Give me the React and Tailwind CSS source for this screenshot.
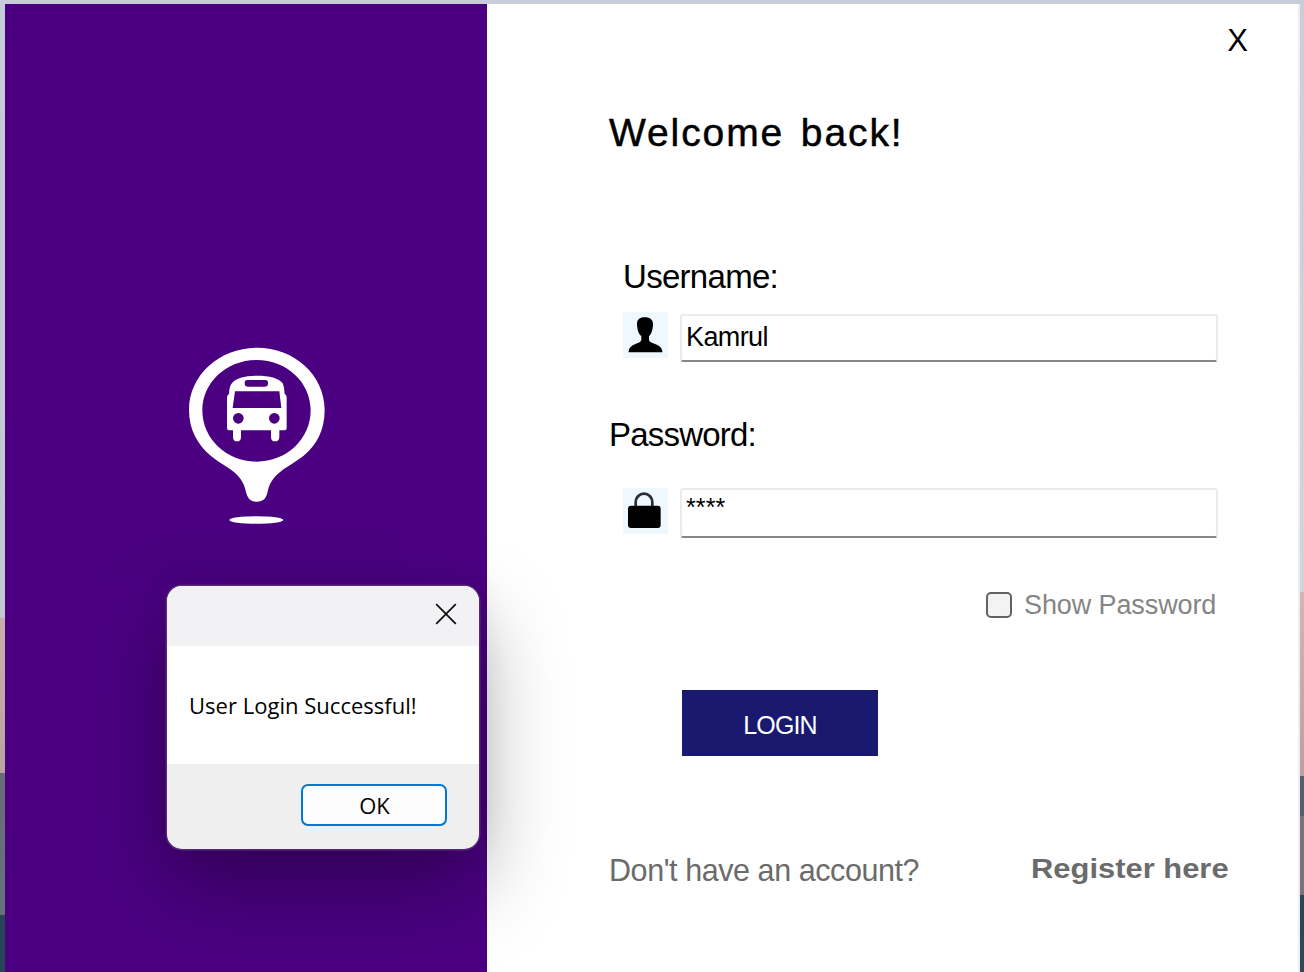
import React from "react";

function BusPin() {
  return (
    <svg className="ml-[74px] mt-[42px] h-[210px] w-[180px]" viewBox="0 0 540 630" aria-hidden="true">
      <path
        fill="#fff"
        fillRule="evenodd"
        d="M261 53C150 53 57 134 57 240C57 300 84 346 124 379C154 404 190 417 211 446C229 470 225 489 236 505C245 519 276 519 285 505C296 489 291 470 310 446C333 417 370 402 400 378C440 345 464 300 464 240C464 134 372 53 261 53ZM260 90C350 90 422 157 422 241C422 327 350 395 260 395C170 395 97 327 97 241C97 157 170 90 260 90Z"
      />
      <path
        fill="#fff"
        fillRule="evenodd"
        d="M184 162C196 144 224 137 261 137C298 137 327 144 338 160C343 171 343 183 344 193Q350 194 350 205V294Q350 301 344 301H328V320Q328 334 315 334Q303 334 303 320V301H213V320Q213 334 201 334Q189 334 189 320V301H177Q171 301 171 294V205Q171 194 177 193Q177 173 184 162ZM232 150Q224 150 224 160Q224 170 232 170H286Q294 170 294 160Q294 150 286 150ZM195 184L188 234H334L328 184ZM205 249A16 16 0 1 0 205 281A16 16 0 1 0 205 249ZM313 249A16 16 0 1 0 313 281A16 16 0 1 0 313 249Z"
      />
      <ellipse cx="259" cy="570" rx="81" ry="11.5" fill="#fff" />
    </svg>
  );
}

function UserIcon() {
  return (
    <svg className="mt-[-2px] h-[46px] w-[45px] shrink-0 bg-[#f0f8ff]" viewBox="0 0 135 138" aria-hidden="true">
      <path d="M65 16C49 16 41 24 42 39C43 54 46 65 55 73V84C52 97 20 94 17 117V121H118V117C115 94 81 97 78 84V73C86 65 89 54 90 39C91 24 82 16 65 16Z" />
    </svg>
  );
}

function LockIcon() {
  return (
    <svg className="h-[46px] w-[45px] shrink-0 bg-[#f0f8ff]" viewBox="0 0 135 138" aria-hidden="true">
      <path d="M38 55V44C38 8 88 8 88 44V55" fill="none" stroke="#2b2d30" strokeWidth="8" />
      <rect x="15" y="53" width="98" height="67" rx="9" />
    </svg>
  );
}

function Desktop({ children }) {
  return (
    <div className="relative flex h-[972px] w-[1304px] overflow-hidden bg-[#c8ced9] pt-1 font-['Liberation_Sans',Arial,sans-serif] text-black">
      <div className="flex w-[5px] shrink-0 flex-col">
        <div className="h-[614px] bg-linear-to-b from-[#c5cdd8] to-[#c3c7d0]" />
        <div className="h-[155px] bg-linear-to-b from-[#c7adab] to-[#b9a4a2]" />
        <div className="h-[142px] bg-linear-to-b from-[#686d77] to-[#65717b]" />
        <div className="flex-1 bg-[#254657]" />
      </div>
      {children}
      <div className="flex w-1 shrink-0 flex-col">
        <div className="h-[588px] bg-linear-to-b from-[#c9ceda] to-[#d1d5db]" />
        <div className="h-[184px] bg-linear-to-b from-[#d5b5b2] to-[#bd9f9f]" />
        <div className="h-[40px] bg-[#526071]" />
        <div className="h-[79px] bg-[#77727c]" />
        <div className="flex-1 bg-linear-to-b from-[#254657] to-[#2d4b5e]" />
      </div>
    </div>
  );
}

function MessageBox() {
  return (
    <div
      role="dialog"
      className="absolute left-[167px] top-[586px] flex h-[263px] w-[312px] flex-col overflow-hidden rounded-[15px] bg-[#efefef] shadow-[0_0_0_1.5px_#552878,0_36px_84px_rgba(0,0,0,0.34),0_0_32px_rgba(0,0,0,0.08)]"
    >
      <div className="flex h-[60px] shrink-0 justify-end bg-[#f2f2f4] pr-[22px] pt-[17px]">
        <svg className="h-[22px] w-[22px]" viewBox="0 0 22 22" aria-label="Close">
          <path d="M1.2 1.2L20.8 20.8M20.8 1.2L1.2 20.8" stroke="#111" strokeWidth="1.8" />
        </svg>
      </div>
      <div className="h-[118px] shrink-0 bg-white pl-[22px] pt-[43px] font-['Open_Sans','Noto_Sans',sans-serif] text-[22px] leading-[32px] tracking-[0.02px] whitespace-nowrap">
        User Login Successful!
      </div>
      <div className="flex flex-1 justify-end pr-8 pt-5">
        <button className="h-[42px] w-[146px] rounded-[7px] border-2 border-[#0078d4] bg-[#fdfdfd] pb-px pl-px font-['Open_Sans','Noto_Sans',sans-serif] text-[22px] leading-[36px]">
          OK
        </button>
      </div>
    </div>
  );
}

const inputClass =
  "w-[538px] rounded-[3px] border-2 border-[#ebebeb] border-b-[#868686] bg-white pl-1 outline-none";

export default function App() {
  return (
    <Desktop>
      <aside className="w-[482px] shrink-0 bg-[#4b0082]">
        <div className="ml-[91px] mt-[284px] flex h-[294px] w-[306px] bg-[#4a0080]">
          <BusPin />
        </div>
      </aside>
      <main className="flex w-[813px] shrink-0 flex-col border-r-2 border-[#eeeef0] bg-white pl-[122px]">
        <div className="flex h-[105px] justify-end pr-[50px] pt-[17px]">
          <button className="h-10 text-[31px] leading-[40px]">X</button>
        </div>
        <h1 className="h-12 text-[39px] leading-[48px] tracking-[1.9px] [word-spacing:4px] whitespace-nowrap [-webkit-text-stroke:0.5px_black]">
          Welcome back!
        </h1>
        <label className="mt-[100px] h-10 pl-[14px] text-[33px] leading-[40px] tracking-[-0.7px]">Username:</label>
        <div className="mt-[17px] flex gap-3 pl-[14px]">
          <UserIcon />
          <input className={`${inputClass} h-12 pb-[1px] text-[27px] tracking-[-0.6px]`} defaultValue="Kamrul" />
        </div>
        <label className="mt-[53px] h-10 text-[33px] leading-[40px] tracking-[-0.8px]">Password:</label>
        <div className="mt-[33px] flex gap-3 pl-[14px]">
          <LockIcon />
          <input className={`${inputClass} h-[50px] pb-[11px] text-[25px] tracking-[0.1px]`} defaultValue="****" />
        </div>
        <label className="mt-[47px] flex h-10 items-center pl-[377px] text-[27px] leading-[40px] tracking-[-0.1px] text-[#858585] whitespace-nowrap">
          <span className="mr-3 h-[26px] w-[26px] rounded-[5px] border-2 border-[#626262] bg-[#f3f3f3]" />
          Show Password
        </label>
        <button className="ml-[73px] mt-[65px] h-[66px] w-[196px] bg-[#191970] pt-[5px] text-[25px] tracking-[-0.9px] text-white">
          LOGIN
        </button>
        <div className="mt-[93px] flex h-10 justify-between pr-[69px] leading-[40px] text-[#6b6b6b] whitespace-nowrap">
          <span className="pt-px text-[30.5px] tracking-[-0.43px]">Don't have an account?</span>
          <span className="origin-right scale-x-[1.145] text-[27px] font-bold">Register here</span>
        </div>
      </main>
      <MessageBox />
    </Desktop>
  );
}
